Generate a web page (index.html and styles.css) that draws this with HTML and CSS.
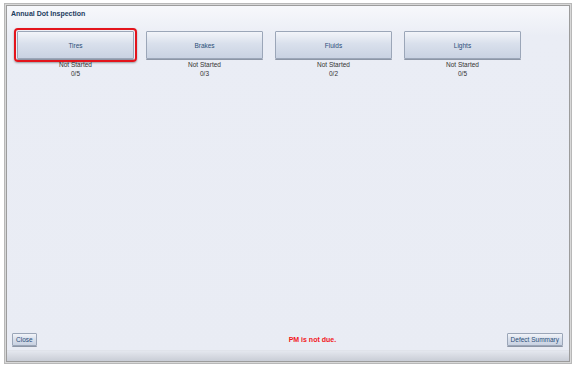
FILE: index.html
```html
<!DOCTYPE html>
<html lang="en">
<head>
    <meta charset="UTF-8">
    <meta name="viewport" content="width=device-width, initial-scale=1.0">
    <title>Annual Dot Inspection</title>
    <link rel="stylesheet" href="styles.css">
</head>
<body>
    <div class="window">
        <div class="dialog">
            <div class="title">Annual Dot Inspection</div>
            <ul class="groups">
                <li>
                    <div class="btn big marked">Tires</div>
                    <p>Not Started</p>
                    <p>0/5</p>
                </li>
                <li>
                    <div class="btn big">Brakes</div>
                    <p>Not Started</p>
                    <p>0/3</p>
                </li>
                <li>
                    <div class="btn big">Fluids</div>
                    <p>Not Started</p>
                    <p>0/2</p>
                </li>
                <li>
                    <div class="btn big">Lights</div>
                    <p>Not Started</p>
                    <p>0/5</p>
                </li>
            </ul>
            <div class="footer">
                <div class="btn small">Close</div>
                <div class="msg">PM is not due.</div>
                <div class="btn small">Defect Summary</div>
            </div>
            <div class="statusbar"></div>
        </div>
    </div>
</body>
</html>
```

FILE: styles.css
```css
*{
    padding: 0px;
    margin: 0px;
    list-style: none;
    box-sizing: border-box;
}
body{
    background-color: #fff;
    font-family: "Liberation Sans", Arial, sans-serif;
    font-size: 6.5px;
    color: #333;
}
.window{
    margin: 3px 4px 0px 4px;
    height: 361px;
    border: 1px solid #b8b8b8;
    padding: 1px;
    background-color: #d8d8d8;
}
.dialog{
    height: 100%;
    border: 1px solid #9c9c9c;
    background: linear-gradient(#f7f8fb, #eaedf5 30px, #e9ecf4);
    display: flex;
    flex-direction: column;
}
.title{
    padding: 2px 4px;
    line-height: 12px;
    font-size: 7px;
    font-weight: bold;
    color: #1d3c5e;
}
.groups{
    display: flex;
    gap: 12px;
    margin: 9px 0px 0px 10px;
}
.groups li{
    width: 117px;
    text-align: center;
}
.groups p{
    line-height: 9px;
}
.groups li .btn + p{
    margin-top: 1px;
}
.btn{
    text-align: center;
    color: #2b4e78;
    border: 1px solid #9ba6b8;
    border-radius: 1px;
    background: linear-gradient(#f2f4f9, #d9e0ec 45%, #c9d2e2);
    box-shadow: 0px 1px 0px #8d96a6;
}
.btn.big{
    height: 28px;
    line-height: 27px;
}
.btn.small{
    height: 13px;
    line-height: 11px;
    padding: 0px 3px;
    color: #2b4e78;
}
.marked{
    position: relative;
}
.marked::after{
    content: "";
    position: absolute;
    left: -4px;
    top: -4px;
    right: -4px;
    bottom: -4px;
    border: 2px solid #e3141c;
    border-radius: 4px;
    box-shadow: 0px 1px 2px rgba(0,0,0,.35);
}
.footer{
    margin-top: auto;
    display: flex;
    align-items: center;
    padding: 0px 6px 4px 5px;
}
.msg{
    color: #f2161b;
    font-weight: bold;
    font-size: 7px;
    margin: 0px auto 0px 252px;
}
.statusbar{
    height: 11px;
    background: linear-gradient(#e4e7ee, #c9cdd6);
    border-top: 1px solid #e0e3ea;
}
```
